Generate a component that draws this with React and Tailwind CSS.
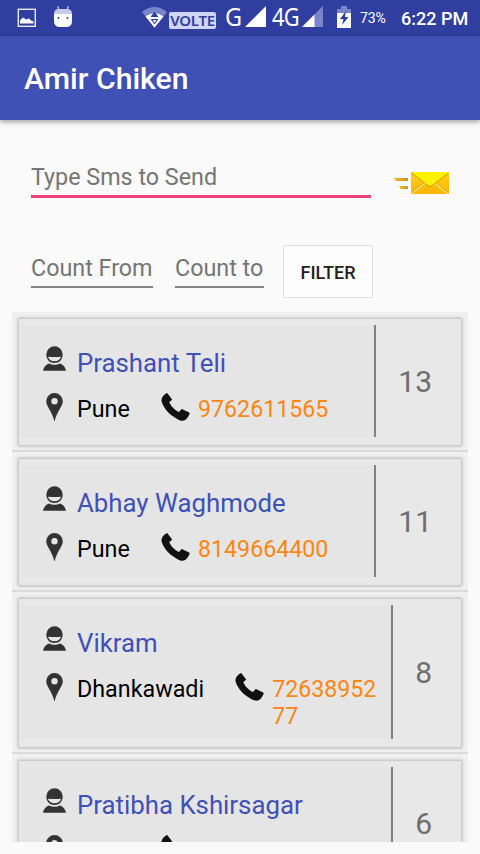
// the last customer is scrolled mostly out of the list, only the top of the row shows
const customers = [
  { name: "Prashant Teli", place: "Pune", phone: ["9762611565"], count: 13 },
  { name: "Abhay Waghmode", place: "Pune", phone: ["8149664400"], count: 11 },
  { name: "Vikram", place: "Dhankawadi", phone: ["72638952", "77"], count: 8 },
  { name: "Pratibha Kshirsagar", place: "", phone: [], count: 6 },
];

function PersonIcon() {
  return (
    <svg className="w-[23px] h-[25px] shrink-0" viewBox="0 0 23 25" fill="#333">
      <path d="M11.5 0.3a8.2 8.2 0 0 1 8.2 8.2c0 5-3.6 8.5-8.2 8.5s-8.2-3.5-8.2-8.5A8.2 8.2 0 0 1 11.5 0.3z" />
      <path d="M5 10.700q6.500.8 13 0c-.7 2.800-3.100 4.500-6.500 4.500s-5.800-1.700-6.500-4.500z" fill="#e5e5e5" />
      <path d="M0 24.700c.8-4 3-6 6-7.200 1.700 1 3.500 1.300 5.500 1.300s3.800-.3 5.500-1.300c3 1.200 5.200 3.200 6 7.200z" />
    </svg>
  );
}

function PinIcon() {
  return (
    <svg className="w-[17px] h-[28px] shrink-0" viewBox="0 0 17 28" fill="#333">
      <path fillRule="evenodd" d="M8.500 0A8.300 8.300 0 0 1 16.800 8.300C16.800 13.500 11 18 8.700 28h-.4C6 18 .2 13.500.2 8.300A8.300 8.300 0 0 1 8.500 0zm0 5a3.200 3.200 0 1 0 0 6.400 3.200 3.200 0 0 0 0-6.400z" />
    </svg>
  );
}

function PhoneIcon() {
  return (
    <svg className="w-[29px] h-[29px] shrink-0" viewBox="0 0 29 29" fill="#111">
      <path d="M5.500.3q.6-.5 1.100.1l4.200 5.500q.5.8-.2 1.300L8.300 9c1.500 4 5.200 8 9.800 10l2-2.500q.6-.7 1.300-.3l6.700 3.400q.8.500.4 1.300c-1.200 2.700-2.700 5-4.900 6.300-1.800.9-4.600.3-6.600-.8C9.500 22.500 3 16.500.6 8.500-.2 5 2.500 2 5.500.3z" />
    </svg>
  );
}

function MailIcon() {
  return (
    <svg className="w-[56px] h-[24px] shrink-0" viewBox="0 0 56 24">
      <defs>
        <linearGradient id="speed" x1="0" x2="1">
          <stop offset="0" stopColor="#f0b840" />
          <stop offset="1" stopColor="#d99010" />
        </linearGradient>
        <linearGradient id="body" x1="0" x2="0" y1="0" y2="1">
          <stop offset="0" stopColor="#ffd21a" />
          <stop offset="1" stopColor="#fbb400" />
        </linearGradient>
      </defs>
      <path d="M0 7h14v3H2z" fill="url(#speed)" />
      <path d="M5 15h9v3H6.500z" fill="url(#speed)" />
      <rect x="17" y="1" width="38" height="22" rx="1.500" fill="url(#body)" />
      <path d="M18 22.500 31 12M54 22.500 41 12" stroke="#fff0a0" strokeWidth="1.200" />
      <path d="M17.500 22 30.500 11.500M54.500 22 41.500 11.500" stroke="#c98900" strokeWidth=".6" />
      <path d="M17.500 1h37L38 14.200q-2 1.500-4 0z" fill="#fff200" />
      <path d="M17.500 2 34 14.600q2 1.400 4 0L54.500 2" fill="none" stroke="#b98700" strokeWidth=".6" />
    </svg>
  );
}

function StatusBar() {
  return (
    <div className="flex h-9 items-start bg-[#303f9f] pl-[17px] text-white">
      <svg className="mt-[8px] w-[20px] h-[20px]" viewBox="0 0 20 20">
        <rect x="1.300" y="1.300" width="17" height="17" fill="none" stroke="#e8eaf8" strokeWidth="1.400" />
        <path d="M3 15.500v-3l3-3 3 2 3-1 2 2 2.500 1v2z" fill="#fff" />
      </svg>
      <svg className="ml-[17px] mt-[5px] w-[18px] h-[23px]" viewBox="0 0 18 23">
        <path d="M4.500 5 4 1M13.500 5 14 1" stroke="#c5cae9" strokeWidth="1.300" />
        <path d="M0 9q0-5 5-5h8q5 0 5 5z" fill="#c5cae9" />
        <path d="M0 9h18v7q0 6-6 6H6q-6 0-6-6z" fill="#fff" />
        <circle cx="4.500" cy="13" r="1" fill="#303f9f" />
        <circle cx="13.500" cy="13" r="1" fill="#303f9f" />
      </svg>
      <svg className="ml-[70px] mt-[7px] w-[25px] h-[21px]" viewBox="0 0 25 21">
        <path d="M0 5Q12.500-5 25 5L12.500 21z" fill="#7984c9" />
        <path d="M3.500 9.500Q12.500 3 21.500 9.500L12.500 20.500z" fill="#fff" />
        <path d="M12.500 4.500 16.500 10h-8zM8.500 12h8l-4 5.500z" fill="#303f9f" />
        <path d="M10.500 13.200h4l-2 2.500z" fill="#fff" />
      </svg>
      <div className="ml-[2px] mt-[12px] flex h-[17px] w-[47px] items-center justify-center rounded-[2px] bg-[#d0d5f3] font-['Noto_Sans'] text-[15px] font-semibold leading-[17px] tracking-[-0.3px] text-[#303f9f]">
        VOLTE
      </div>
      <div className="ml-[9px] mt-[3px] w-[17px] origin-left scale-x-90 font-['Noto_Sans'] text-[26px] leading-[27px]">G</div>
      <svg className="ml-[3px] mt-[6px] w-[21px] h-[21px]" viewBox="0 0 21 21">
        <path d="M0 21 21 0v21z" fill="#fff" />
      </svg>
      <div className="ml-[6px] mt-[3px] w-[28px] origin-left scale-x-84 font-['Noto_Sans'] text-[26px] leading-[27px] tracking-[-0.8px]">4G</div>
      <svg className="ml-[2px] mt-[6px] w-[21px] h-[21px]" viewBox="0 0 21 21">
        <path d="M0 21 21 0v21z" fill="#7984c9" />
        <path d="M0 21 12.500 8.500V21z" fill="#fff" />
      </svg>
      <svg className="ml-[14px] mt-[6px] w-[14px] h-[22px]" viewBox="0 0 14 22">
        <path d="M4 0h6v3h4v5H0V3h4z" fill="#7984c9" />
        <path d="M0 7h14v15H0z" fill="#fff" />
        <path d="M9 5 3 13h3.500L5 19l6.500-8H8z" fill="#303f9f" />
      </svg>
      <div className="ml-[9px] mt-[9px] w-[28px] text-[14px] leading-[18px] tracking-[-0.1px]">73%</div>
      <div className="ml-[13px] mt-[8px] whitespace-nowrap text-[18px] font-medium leading-[22px]">6:22 PM</div>
    </div>
  );
}

function CustomerRow({ customer }) {
  const wraps = customer.phone.length > 1;

  return (
    <li className="shrink-0 border-b-2 border-[#dadada] bg-[#f0f0f0] px-[7px] pb-[5px] pt-[7px]">
      <div className="flex rounded-[1px] bg-[#e8e8e8] pb-2 pl-[3px] pt-[6px] shadow-[0_0_2px_1px_#c8c8c8,0_0_3px_2px_#d6d6d6,0_1px_2px_0px_#b0b0b0]">
        <div className={`flex-1 bg-[#e5e5e5] pl-[21px] pt-[21px] ${wraps ? "h-[134px]" : "h-[112px]"}`}>
          <div className="flex h-[50px] items-start">
            <PersonIcon />
            <span className="ml-[11px] whitespace-nowrap text-[25.8px] leading-[34px] text-[#3f51b5]">{customer.name}</span>
          </div>
          <div className="flex items-start pl-[3px]">
            <div className="-mt-[3px]"><PinIcon /></div>
            <span className="ml-[14px] min-w-[53px] text-[23.3px] leading-[27px] text-black">{customer.place}</span>
            <div className="-mt-[3px] ml-[31px]"><PhoneIcon /></div>
            <div className="ml-2 text-[23.2px] leading-[27px] text-[#ff8610]">
              {customer.phone.map((line) => (
                <div key={line}>{line}</div>
              ))}
            </div>
          </div>
        </div>
        <div className="flex items-center border-l-2 border-[#808080] pl-[22px] pr-[29px] text-[30px] text-[#6e6e6e]">
          {customer.count}
        </div>
      </div>
    </li>
  );
}

export default function App() {
  return (
    <div className="flex h-[854px] w-[480px] flex-col overflow-hidden bg-[#fafafa] font-[Roboto,sans-serif]">
      <StatusBar />
      <header className="flex h-[84px] shrink-0 items-center bg-[#3f51b5] pl-6 pt-[2px] shadow-[0_2px_5px_rgba(0,0,0,0.35)]">
        <h1 className="text-[30.2px] font-medium text-white">Amir Chiken</h1>
      </header>

      <div className="flex h-[125px] shrink-0 items-start pl-[31px] pt-[42px]">
        <div className="h-[36px] w-[340px] border-b-3 border-[#ec407a] text-[23.3px] leading-[30px] text-[#757575]">
          Type Sms to Send
        </div>
        <button className="ml-[23px] mt-[9px]"><MailIcon /></button>
      </div>

      <div className="flex h-[67px] shrink-0 items-start pl-[31px] text-[23.3px] leading-[30px] text-[#757575]">
        <div className="mt-[8px] h-[35px] w-[122px] whitespace-nowrap border-b-2 border-[#858585]">Count From</div>
        <div className="ml-[22px] mt-[8px] h-[35px] w-[89px] whitespace-nowrap border-b-2 border-[#858585]">Count to</div>
        <button className="ml-[19px] flex h-[53px] w-[90px] items-center justify-center rounded-[2px] border border-[#dedede] bg-[#fdfdfd] pt-[2px] text-[18px] font-medium text-[#222]">
          FILTER
        </button>
      </div>

      <ul className="mx-3 flex h-[530px] shrink-0 flex-col overflow-hidden">
        {customers.map((customer) => (
          <CustomerRow key={customer.name} customer={customer} />
        ))}
      </ul>
    </div>
  );
}
